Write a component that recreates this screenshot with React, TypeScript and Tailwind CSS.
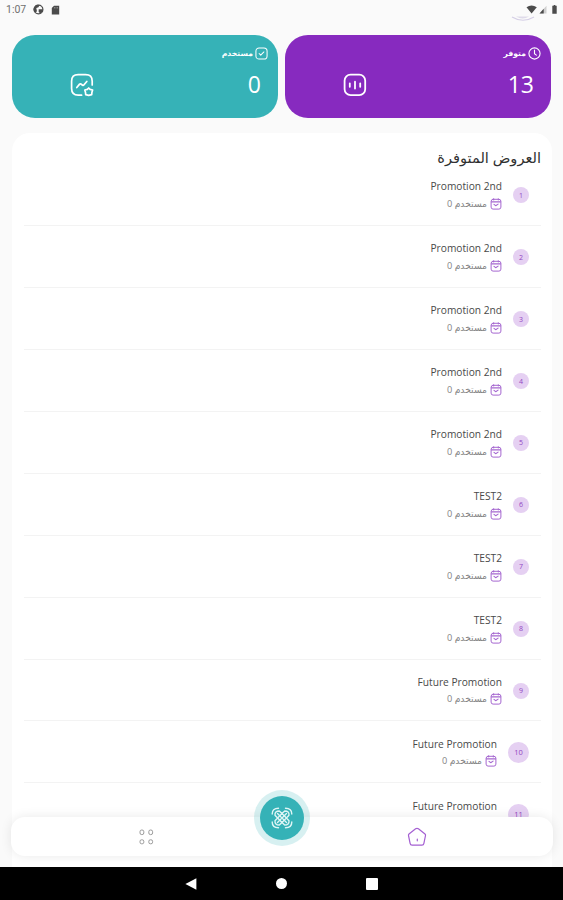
import { clsx } from "clsx";

interface Promotion {
  id: number;
  name: string;
  used: number;
}

const promotions: Promotion[] = [
  { id: 1, name: "Promotion 2nd", used: 0 },
  { id: 2, name: "Promotion 2nd", used: 0 },
  { id: 3, name: "Promotion 2nd", used: 0 },
  { id: 4, name: "Promotion 2nd", used: 0 },
  { id: 5, name: "Promotion 2nd", used: 0 },
  { id: 6, name: "TEST2", used: 0 },
  { id: 7, name: "TEST2", used: 0 },
  { id: 8, name: "TEST2", used: 0 },
  { id: 9, name: "Future Promotion", used: 0 },
  { id: 10, name: "Future Promotion", used: 0 },
  { id: 11, name: "Future Promotion", used: 0 },
];

function StatusBar() {
  return (
    <div
      dir="ltr"
      className="relative flex h-[35px] shrink-0 items-start justify-between pt-[4px] pr-[4px] pl-[6px] text-[#4b4b4b]"
    >
      <div className="flex items-center">
        <span className="w-[27px] font-['Roboto',sans-serif] text-[10.5px] leading-[11px] text-[#707070]">
          1:07
        </span>
        <svg viewBox="0 0 12 12" className="h-[11px] w-[11px]">
          <circle cx="6" cy="6" r="4.8" fill="none" stroke="currentColor" strokeWidth="1.3" />
          <path d="M7 1.2A4.8 4.8 0 0 0 2.6 9.6L4.3 8 3.6 4.4 6 3.6Z" fill="currentColor" />
          <path d="M6.2 5.6h4.6v2L8 10.4 6.2 8.6Z" fill="currentColor" />
        </svg>
        <svg viewBox="0 0 9 10" className="ml-[7px] h-[10px] w-[9px]">
          <path d="M3 .8h5.2v8.6H.8V3Z" fill="currentColor" />
          <path d="M3.5 2v1.5M5 2v1.5M6.5 2v1.5" stroke="#aaa" strokeWidth=".6" />
        </svg>
      </div>
      <svg viewBox="0 0 33 11" className="mt-px h-[11px] w-[33px]">
        <path d="M.5 2.2Q5.5-1.4 10.8 2.2L5.6 8.5Z" fill="currentColor" />
        <path d="M20.5.8v7.7h-7Z" fill="#cfcfcf" />
        <path d="M17.7 3.8v4.7h-4.2Z" fill="currentColor" />
        <path d="M26.3.8h1.4V0h1.6v.8h1.4v7.9h-4.4Z" fill="currentColor" />
      </svg>
      {/* Bottom edge of the avatar, scrolled under the status bar */}
      <svg viewBox="0 0 24 5" className="absolute top-[16px] left-[511px] h-[5px] w-[24px]">
        <path d="M1 1Q12 7.5 23 1" fill="none" stroke="#d5cfe6" strokeWidth="1.2" />
        <path d="M5 0.4h13q-6 4-13 0Z" fill="#dfdbea" />
      </svg>
    </div>
  );
}

function ClockIcon() {
  return (
    <svg viewBox="0 0 14 14" className="h-[13px] w-[13px]" fill="none" stroke="currentColor" strokeWidth="1.2" strokeLinecap="round">
      <circle cx="7" cy="7" r="6" />
      <path d="M7 3.4v3.8l2 1.5" />
    </svg>
  );
}

function TickSquareIcon() {
  return (
    <svg viewBox="0 0 14 14" className="h-[13px] w-[13px]" fill="none" stroke="currentColor" strokeWidth="1.1" strokeLinecap="round" strokeLinejoin="round">
      <rect x="1" y="1" width="12" height="12" rx="3.4" />
      <path d="m4.4 7 1.8 1.8 3.4-3.5" />
    </svg>
  );
}

function ChartSquareIcon() {
  return (
    <svg viewBox="0 0 24 24" className="h-[24px] w-[24px]" fill="none" stroke="currentColor" strokeLinecap="round">
      <rect x="1.6" y="1.6" width="20.6" height="20.6" rx="6" strokeWidth="1.8" />
      <path d="M6.8 10.3v3.5M12 8.7v6.8M17.2 10.3v3.5" strokeWidth="1.8" />
    </svg>
  );
}

function TrendStarIcon() {
  return (
    <svg viewBox="0 0 24 24" className="h-[24px] w-[24px]" fill="none" stroke="currentColor" strokeWidth="1.7" strokeLinecap="round" strokeLinejoin="round">
      <path d="M22.2 12V8.2q0-6.6-6.6-6.6H8.2q-6.6 0-6.6 6.6v7.4q0 6.6 6.6 6.6h3.4" />
      <path d="m6.8 14.5 2.8-3.4q.6-.6 1.3-.1l1.7 1.2q.7.4 1.2-.2l3-3.5" />
      <path d="m18.7 15 1.4 1.4 2.5.6-.7 2.4-.2 2.2-3 .8-3-.8-.2-2.2-.7-2.4 2.5-.6Z" />
    </svg>
  );
}

function CalendarIcon() {
  return (
    <svg viewBox="0 0 12 12" className="h-[12px] w-[12px] shrink-0 text-[#a567d0]" fill="none" stroke="currentColor" strokeLinecap="round" strokeLinejoin="round">
      <rect x="1.1" y="1.3" width="9.8" height="9.8" rx="2" strokeWidth="1" />
      <path d="M1.5 3.8h9" strokeWidth="1.2" />
      <path d="M3.7.8v1.2M8.3.8v1.2" strokeWidth="1" />
      <path d="m4 6.3 1.7 1.4 2.4-1.6" strokeWidth="1.1" />
    </svg>
  );
}

interface StatCardProps {
  label: string;
  value: number;
  color: string;
  labelIcon: React.ReactNode;
  icon: React.ReactNode;
}

function StatCard({ label, value, color, labelIcon, icon }: StatCardProps) {
  return (
    <div className={clsx("h-[83px] w-[266px] rounded-[23px] pt-[11px] pr-[10px] text-white", color)}>
      <div className="flex h-[14px] items-center gap-[2px]">
        {labelIcon}
        <span className="text-[7.7px] leading-[14px] font-bold">{label}</span>
      </div>
      <div className="mt-[12px] flex h-[25px] items-center justify-between pr-[7px] pl-[58px]">
        <span className="text-[23px] leading-[25px]">{value}</span>
        {icon}
      </div>
    </div>
  );
}

function PromotionRow({ promotion }: { promotion: Promotion }) {
  const wide = promotion.id > 9;

  return (
    <li className="flex h-[61.95px] items-center border-b border-[#f3f3f3] pt-[1.5px] pr-[12px]">
      <span
        className={clsx(
          "flex shrink-0 items-center justify-center rounded-full bg-[#e5d0f2] leading-none text-[#9146c2]",
          wide ? "h-[21px] w-[21px] text-[7.5px]" : "h-[16px] w-[16px] text-[7px]"
        )}
      >
        {promotion.id}
      </span>
      <div className="mr-[11px] flex flex-col">
        <p dir="ltr" className="text-right text-[10.2px] leading-[16px] text-[#494949]">
          {promotion.name}
        </p>
        <div className="mt-[1.5px] flex h-[16px] items-center gap-[3px]">
          <CalendarIcon />
          <span className="text-[9.2px] leading-[16px] text-[#858585]">
            مستخدم {promotion.used}
          </span>
        </div>
      </div>
    </li>
  );
}

function BottomNav() {
  return (
    <nav
      dir="ltr"
      className="absolute top-[817px] left-[11px] flex h-[39px] w-[542px] items-center rounded-[14px] bg-white shadow-[0_0_12px_rgba(0,0,0,0.09)]"
    >
      <button className="flex w-1/2 justify-center">
        <svg viewBox="0 0 16 16" className="h-[16px] w-[16px] text-[#999]" fill="none" stroke="currentColor" strokeWidth="1">
          <rect x="1" y="1" width="3.8" height="4.6" rx="1.7" />
          <rect x="9.8" y="1" width="3.8" height="4.6" rx="1.7" />
          <rect x="1" y="10.8" width="3.8" height="4" rx="1.6" />
          <rect x="9.8" y="10.8" width="3.8" height="4" rx="1.6" />
        </svg>
      </button>
      <button className="flex w-1/2 justify-center pr-[1px]">
        <svg viewBox="0 0 20 20" className="h-[20px] w-[20px] text-[#a45fd2]" fill="none" stroke="currentColor" strokeWidth="1.2" strokeLinejoin="round" strokeLinecap="round">
          <path d="M8.6 1.8 2 7q-.7.6-.5 1.5l1.6 7.8q.3 1.8 2 1.8h9.8q1.7 0 2-1.8l1.6-7.8q.2-.9-.5-1.5l-6.6-5.2q-1.4-1-2.8 0Z" />
          <path d="M10.3 12v1.8" />
        </svg>
      </button>
    </nav>
  );
}

function ScanButton() {
  return (
    <button className="absolute top-[790px] left-[253.5px] flex h-[56px] w-[56px] items-center justify-center rounded-full bg-[#35b2b7]/20">
      <span className="flex h-[44px] w-[44px] items-center justify-center rounded-full bg-[#35b2b7] text-[#dff5f5]">
        <svg viewBox="0 0 22 22" className="h-[22px] w-[22px]" fill="none" stroke="currentColor" strokeWidth="1.4" strokeLinecap="round" strokeLinejoin="round">
          <path d="M1.2 7Q1.2 1.2 7.5 1.2M14.5 1.2q6.3 0 6.3 5.8M1.2 15q0 5.8 6.3 5.8M14.5 20.8q6.3 0 6.3-5.8" />
          <path d="M4 8.3Q3.7 4 8.3 4L11 6.6 13.7 4Q18.3 4 18 8.3L15.4 11 18 13.7Q18.3 18 13.7 18L11 15.4 8.3 18Q3.7 18 4 13.7L6.6 11Z" />
          <path d="m6.5 6.5 9 9M15.5 6.5l-9 9" />
          <path d="m11 6.6 4.4 4.4-4.4 4.4L6.6 11Z" />
        </svg>
      </span>
    </button>
  );
}

function SystemBar() {
  return (
    <div dir="ltr" className="absolute inset-x-0 top-[867px] flex h-[33px] items-center justify-center gap-[79px] bg-black">
      <svg viewBox="0 0 12 12" className="h-[12px] w-[12px]">
        <path d="M.4 6 11.4.2v11.6Z" fill="white" />
      </svg>
      <span className="h-[11px] w-[11px] rounded-full bg-white" />
      <span className="h-[12px] w-[12px] rounded-[1px] bg-white" />
    </div>
  );
}

export default function App() {
  return (
    <div
      dir="rtl"
      className="relative flex h-[900px] w-[563px] flex-col overflow-hidden bg-[#fafafa] font-['Open_Sans','Noto_Sans','DejaVu_Sans',sans-serif]"
    >
      <StatusBar />

      <div className="flex shrink-0 gap-[7px] pr-[12px]">
        <StatCard
          label="متوفر"
          value={13}
          color="bg-[#872abf]"
          labelIcon={<ClockIcon />}
          icon={<ChartSquareIcon />}
        />
        <StatCard
          label="مستخدم"
          value={0}
          color="bg-[#36b2b7]"
          labelIcon={<TickSquareIcon />}
          icon={<TrendStarIcon />}
        />
      </div>

      <main className="mt-[15px] mr-[11px] ml-[12px] h-[734px] shrink-0 overflow-hidden rounded-t-[18px] bg-white pt-[14px] pr-[11px] pl-[12px]">
        <h1 className="h-[17px] text-[14.6px] leading-[20px] whitespace-nowrap text-[#303030]">
          العروض المتوفرة
        </h1>
        <ul>
          {promotions.map((promotion) => (
            <PromotionRow key={promotion.id} promotion={promotion} />
          ))}
        </ul>
      </main>

      <BottomNav />
      <ScanButton />
      <SystemBar />
    </div>
  );
}
